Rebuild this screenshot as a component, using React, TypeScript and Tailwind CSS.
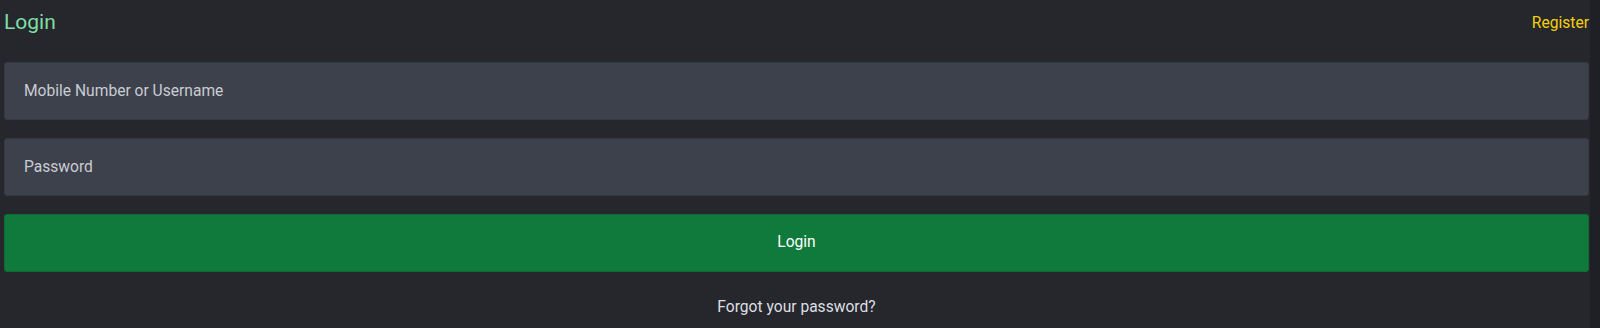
export default function App() {
  return (
    <div className="flex h-[328px] w-full overflow-hidden bg-[#26272c]" style={{ fontFamily: "Roboto, 'Liberation Sans', sans-serif" }}>
      <div className="flex-1 pl-1 pr-px">
        <div className="flex h-[62px] items-start justify-between">
          <h1 className="mt-[9px] text-[21px] leading-[26px] text-[#7ddfa5]">Login</h1>
          <a href="#" className="mt-[13px] text-[15.6px] leading-[20px] text-[#f5cf0c]">Register</a>
        </div>
        <form className="flex flex-col">
          <input
            type="text"
            placeholder="Mobile Number or Username"
            className="mb-[18px] h-[58px] w-full rounded-[3px] border border-[#363943] bg-[#3d414c] px-[19px] text-[15.6px] text-[#c9ccd3] outline-none placeholder:text-[#c9ccd3]"
          />
          <input
            type="password"
            placeholder="Password"
            className="mb-[18px] h-[58px] w-full rounded-[3px] border border-[#363943] bg-[#3d414c] px-[19px] text-[15.6px] text-[#c9ccd3] outline-none placeholder:text-[#c9ccd3]"
          />
          <button
            type="button"
            className="h-[58px] w-full rounded-[3px] border border-[#0d6e35] bg-[#0f7a3c] text-[15.6px] text-white"
          >
            Login
          </button>
        </form>
        <p className="mt-[25px] text-center text-[15.6px] leading-[20px] text-[#dcdfe3]">Forgot your password?</p>
      </div>
      {/* scrollbar track */}
      <div className="w-[10px] bg-[#1f2025]" />
    </div>
  );
}
